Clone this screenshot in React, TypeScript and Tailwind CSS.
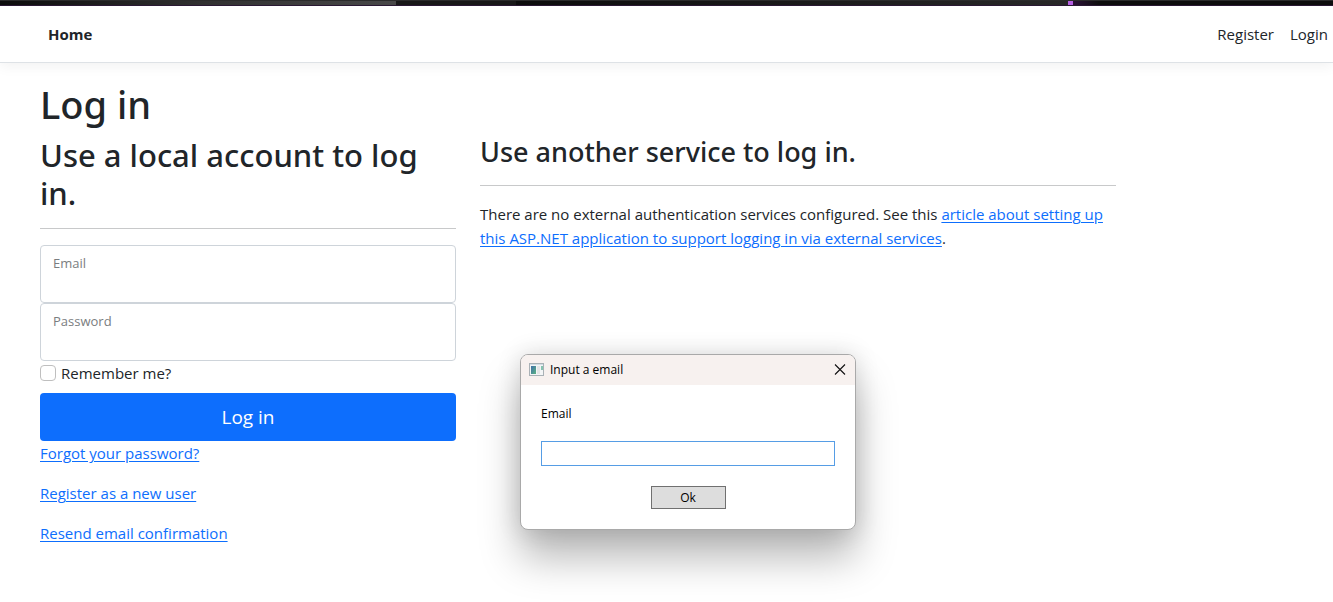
import React from "react";

const linkClass = "text-[#0d6efd] underline underline-offset-2";
const headingClass = "font-['Noto_Sans',sans-serif] font-medium";

function WindowEdge() {
  return (
    <div className="flex h-[6px] flex-col bg-[#101010]" aria-hidden="true">
      <div className="h-px bg-[#2b2b2b]" />
      <div className="flex h-1">
        <div className="w-[396px] bg-linear-to-r from-[#0c0c0c] via-[#303030] to-[#484848]" />
        <div className="w-[120px] bg-[#181818]" />
        <div className="flex-1 bg-linear-to-r from-[#0c0c0c] to-[#282828]" />
        <div className="w-[5px] bg-[#b45fe0]" />
        <div className="w-[260px] bg-linear-to-r from-[#2c1038] via-[#0d0d0d] via-10% to-[#0d0d0d]" />
      </div>
      <div className="h-px bg-[#2a1833]" />
    </div>
  );
}

function NavBar() {
  return (
    <nav className="mb-4 flex h-[57px] items-center justify-between border-b border-[#dee2e6] bg-white pr-[5px] pl-12 shadow-[0_4px_12px_rgba(0,0,0,0.05)]">
      <a href="#home" className="font-bold">
        Home
      </a>
      <div className="flex gap-4">
        <a href="#register">Register</a>
        <a href="#login">Login</a>
      </div>
    </nav>
  );
}

function FloatingField({ id, label, type }: { id: string; label: string; type: string }) {
  return (
    <div className="relative h-[58px]">
      <input
        id={id}
        type={type}
        className="h-full w-full rounded border border-[#ced4da] bg-white px-3 pt-6 pb-2 outline-none"
      />
      <label htmlFor={id} className="absolute top-2 left-[13px] text-[13px] leading-5 text-[#7a7d80]">
        {label}
      </label>
    </div>
  );
}

function LoginForm() {
  return (
    <section className="w-full max-w-[440px] px-3">
      <h2 className={`${headingClass} pt-px pr-4 text-[31px] leading-[38px]`}>Use a local account to log in.</h2>
      <hr className="my-4 border-[#c8c9ca]" />
      <form>
        <FloatingField id="email" label="Email" type="email" />
        <FloatingField id="password" label="Password" type="password" />
        <label className="mb-2 flex h-6 items-center gap-[5px]">
          <input
            type="checkbox"
            className="h-4 w-4 appearance-none rounded border border-[#bfbfbf] bg-white checked:bg-[#0d6efd]"
          />
          Remember me?
        </label>
        <button type="button" className="h-12 w-full rounded bg-[#0d6efd] text-[19px] text-white">
          Log in
        </button>
        <div className="flex flex-col items-start gap-4">
          <a href="#forgot" className={linkClass}>
            Forgot your password?
          </a>
          <a href="#new-user" className={linkClass}>
            Register as a new user
          </a>
          <a href="#resend" className={linkClass}>
            Resend email confirmation
          </a>
        </div>
      </form>
    </section>
  );
}

function ExternalServices() {
  return (
    <section className="w-full max-w-[660px] px-3">
      <h3 className={`${headingClass} text-[27px] leading-[34px]`}>Use another service to log in.</h3>
      <hr className="my-4 border-[#c8c9ca]" />
      <p>
        There are no external authentication services configured. See this{" "}
        <a href="#article" className={linkClass}>
          article about setting up this ASP.NET application to support logging in via external services
        </a>
        .
      </p>
    </section>
  );
}

function AppIcon() {
  return (
    <svg width="16" height="14" viewBox="0 0 16 14" aria-hidden="true">
      <defs>
        <linearGradient id="pane" x1="0" y1="0" x2="1" y2="1">
          <stop offset="0" stopColor="#3f6fa8" />
          <stop offset="1" stopColor="#5bb383" />
        </linearGradient>
      </defs>
      <rect x="0.5" y="0.5" width="14" height="12" fill="#f3f5f6" stroke="#a9b1b6" />
      <rect x="1" y="1" width="13" height="1" fill="#d3dde4" />
      <rect x="2" y="3" width="5" height="8" fill="url(#pane)" />
      <rect x="8" y="3" width="3" height="8" fill="#e3e5e6" />
      <rect x="12" y="3" width="2" height="4" fill="#86c3b0" />
    </svg>
  );
}

function EmailDialog() {
  return (
    <div
      role="dialog"
      aria-labelledby="dialog-title"
      className="absolute top-[354px] left-[520px] w-[336px] overflow-hidden rounded-lg border border-[#a9a9a9] bg-white text-[12px] leading-4 text-black shadow-[0_28px_40px_rgba(0,0,0,0.28),0_0_24px_rgba(0,0,0,0.14)]"
    >
      <div className="flex h-[30px] items-center gap-[5px] bg-[#f7f1ef] pr-[9px] pl-2">
        <AppIcon />
        <span id="dialog-title" className="flex-1">
          Input a email
        </span>
        <button type="button" aria-label="Close">
          <svg width="12" height="12" viewBox="0 0 12 12" stroke="#111111" strokeWidth="1.1" aria-hidden="true">
            <path d="M1 0.5l10 10M11 0.5L1 10.5" />
          </svg>
        </button>
      </div>
      <div className="flex flex-col items-center p-5">
        <label htmlFor="dialog-email" className="mb-[18px] self-start leading-[18px]">
          Email
        </label>
        <input
          id="dialog-email"
          type="text"
          className="mb-5 h-[25px] w-full border border-[#569de5] bg-white px-1 outline-none"
        />
        <button type="button" className="h-[23px] w-[75px] border border-[#707070] bg-[#dddddd]">
          Ok
        </button>
      </div>
    </div>
  );
}

export default function App() {
  return (
    <div className="relative min-h-screen bg-white font-['Open_Sans','Noto_Sans',sans-serif] text-[15px] leading-6 text-[#212529]">
      <WindowEdge />
      <NavBar />
      <main className="pl-7">
        <h1 className={`${headingClass} mb-[6px] px-3 text-[38px] leading-[50px]`}>Log in</h1>
        <div className="flex">
          <LoginForm />
          <ExternalServices />
        </div>
      </main>
      <EmailDialog />
    </div>
  );
}
